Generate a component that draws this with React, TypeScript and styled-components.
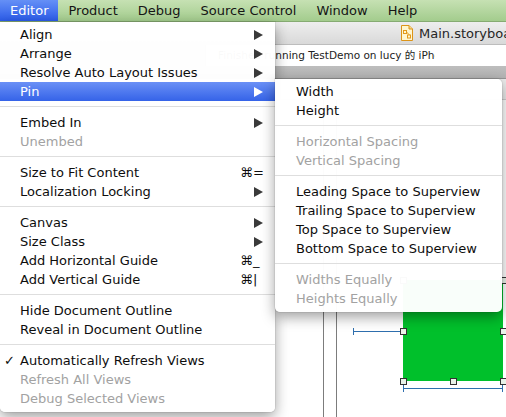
import styled, { createGlobalStyle } from 'styled-components';

const GlobalStyle = createGlobalStyle`
  *, *::before, *::after { box-sizing: border-box; }
  html, body { margin: 0; padding: 0; background: #fff; }
  body { font-family: "DejaVu Sans", "Noto Sans CJK SC", sans-serif; }
`;

const Screen = styled.div`
  position: relative;
  width: 506px;
  height: 417px;
  overflow: hidden;
  background: #fff;
  font-size: 13px;
  color: #111;
`;

const MenuBar = styled.div`
  display: flex;
  height: 22px;
  border-bottom: 1px solid #86ab72;
  background: linear-gradient(#c6e1b3, #a3cc8d);
`;

const BarItem = styled.div<{ $open?: boolean }>`
  padding: 0 10px;
  line-height: 21px;
  white-space: nowrap;
  color: ${p => (p.$open ? '#fff' : '#151515')};
  background: ${p => (p.$open ? 'linear-gradient(#6590f6, #2b5be9)' : 'transparent')};
`;

const Window = styled.div`
  display: flex;
  flex-direction: column;
  height: 395px;
`;

const TabBar = styled.div`
  display: flex;
  align-items: center;
  height: 22px;
  padding-left: 401px;
  background: linear-gradient(#eeeeee, #d9d9d9);
`;

const Tab = styled.div`
  display: flex;
  align-items: center;
  gap: 6px;
  white-space: nowrap;
  color: #262626;
`;

const ActivityRow = styled.div`
  display: flex;
  height: 22px;
  padding-left: 205px;
  background: #d4d4d4;
  border-top: 1px solid #bdbdbd;
`;

const ActivityField = styled.div`
  flex: 1;
  background: #fff;
  border-left: 1px solid #b0b0b0;
  padding-left: 12px;
  font-size: 10.5px;
  line-height: 21px;
  color: #222;
`;

const ActivityText = styled.div`
  width: 217px;
  overflow: hidden;
  white-space: nowrap;
`;

const ToolbarFoot = styled.div`
  height: 13px;
  background: linear-gradient(#bdbdbd, #b3b3b3);
  border-bottom: 1px solid #969696;
`;

const JumpBar = styled.div`
  height: 21px;
  background: #ebebeb;
  border-bottom: 1px solid #cfcfcf;
`;

const Canvas = styled.div`
  position: relative;
  flex: 1;
  background: #fff;
`;

const GuideLine = styled.div<{ $x: number }>`
  position: absolute;
  top: 0;
  bottom: 0;
  left: ${p => p.$x}px;
  width: 1px;
  background: #7c7c7c;
`;

const GreenView = styled.div`
  position: absolute;
  left: 403px;
  top: 180px;
  width: 100px;
  height: 101px;
  background: #00c02b;
`;

const Handle = styled.div<{ $x: number; $y: number }>`
  position: absolute;
  left: ${p => p.$x - 3}px;
  top: ${p => p.$y - 3}px;
  width: 7px;
  height: 7px;
  background: #e9f3e9;
  border: 1px solid #333;
`;

const Dimension = styled.div<{ $x: number; $y: number; $w: number; $right?: boolean }>`
  position: absolute;
  left: ${p => p.$x}px;
  top: ${p => p.$y}px;
  width: ${p => p.$w}px;
  height: 1px;
  background: #2f6fae;
  &::before, &::after {
    content: '';
    position: absolute;
    top: -3px;
    width: 1px;
    height: 7px;
    background: #2f6fae;
  }
  &::before { left: 0; }
  &::after { right: 0; display: ${p => (p.$right ? 'block' : 'none')}; }
`;

const MenuPanel = styled.div<{ $top: number; $left: number; $width: number; $sub?: boolean }>`
  position: absolute;
  top: ${p => p.$top}px;
  left: ${p => p.$left}px;
  width: ${p => p.$width}px;
  padding: 3px 0 4px;
  background: rgba(255, 255, 255, 0.975);
  border-radius: ${p => (p.$sub ? '0 5px 5px 5px' : '0 0 5px 5px')};
  box-shadow: 0 5px 14px rgba(0, 0, 0, 0.38), 0 0 0 1px rgba(0, 0, 0, 0.06);
  z-index: ${p => (p.$sub ? 3 : 2)};
`;

const Row = styled.div<{ $disabled?: boolean; $active?: boolean }>`
  display: flex;
  align-items: center;
  height: 19px;
  padding-right: 12px;
  white-space: nowrap;
  color: ${p => (p.$active ? '#fff' : p.$disabled ? '#a2a2a2' : '#0d0d0d')};
  background: ${p => (p.$active ? 'linear-gradient(#6a90f6, #3563e8)' : 'transparent')};
`;

const Gutter = styled.span<{ $w: number }>`
  width: ${p => p.$w}px;
  padding-left: 4px;
  flex-shrink: 0;
  font-size: 13px;
`;

const Label = styled.span`
  flex: 1;
`;

const Shortcut = styled.span`
  width: 23px;
`;

const Separator = styled.div`
  height: 1px;
  margin: 5px 0 6px;
  background: #dedede;
`;

type Item = {
  label?: string;
  sep?: boolean;
  disabled?: boolean;
  arrow?: boolean;
  keys?: string;
  checked?: boolean;
  active?: boolean;
};

const editorItems: Item[] = [
  { label: 'Align', arrow: true },
  { label: 'Arrange', arrow: true },
  { label: 'Resolve Auto Layout Issues', arrow: true },
  { label: 'Pin', arrow: true, active: true },
  { sep: true },
  { label: 'Embed In', arrow: true },
  { label: 'Unembed', disabled: true },
  { sep: true },
  { label: 'Size to Fit Content', keys: '⌘=' },
  { label: 'Localization Locking', arrow: true },
  { sep: true },
  { label: 'Canvas', arrow: true },
  { label: 'Size Class', arrow: true },
  { label: 'Add Horizontal Guide', keys: '⌘_' },
  { label: 'Add Vertical Guide', keys: '⌘|' },
  { sep: true },
  { label: 'Hide Document Outline' },
  { label: 'Reveal in Document Outline' },
  { sep: true },
  { label: 'Automatically Refresh Views', checked: true },
  { label: 'Refresh All Views', disabled: true },
  { label: 'Debug Selected Views', disabled: true },
];

const pinItems: Item[] = [
  { label: 'Width' },
  { label: 'Height' },
  { sep: true },
  { label: 'Horizontal Spacing', disabled: true },
  { label: 'Vertical Spacing', disabled: true },
  { sep: true },
  { label: 'Leading Space to Superview' },
  { label: 'Trailing Space to Superview' },
  { label: 'Top Space to Superview' },
  { label: 'Bottom Space to Superview' },
  { sep: true },
  { label: 'Widths Equally', disabled: true },
  { label: 'Heights Equally', disabled: true },
];

const Arrow = ({ color }: { color: string }) => (
  <svg width="9" height="10" viewBox="0 0 9 10">
    <polygon points="0,0 9,5 0,10" fill={color} />
  </svg>
);

const StoryboardIcon = () => (
  <svg width="12" height="16" viewBox="0 0 12 16">
    <path d="M0.5 0.5 H8 L11.5 4 V15.5 H0.5 Z" fill="#fff6cf" stroke="#dc9418" />
    <path d="M8 0.5 V4 H11.5" fill="#f6d88a" stroke="#dc9418" />
    <rect x="2.5" y="5.5" width="3" height="3" fill="none" stroke="#e39a1c" />
    <path d="M5.5 7 L8.5 10" stroke="#e39a1c" />
    <rect x="6.5" y="10" width="3" height="3" fill="none" stroke="#e39a1c" />
  </svg>
);

const Menu = ({ items, gutter }: { items: Item[]; gutter: number }) => (
  <>
    {items.map((it, i) =>
      it.sep ? (
        <Separator key={i} />
      ) : (
        <Row key={i} $disabled={it.disabled} $active={it.active}>
          <Gutter $w={gutter}>{it.checked ? '✓' : ''}</Gutter>
          <Label>{it.label}</Label>
          {it.keys && <Shortcut>{it.keys}</Shortcut>}
          {it.arrow && <Arrow color={it.active ? '#fff' : '#3a3a3a'} />}
        </Row>
      )
    )}
  </>
);

const handles = [
  [403, 180], [503, 180], [403, 231], [503, 231], [403, 281], [453, 281], [503, 281],
];

export default function App() {
  return (
    <Screen>
      <GlobalStyle />
      <MenuBar>
        <BarItem $open>Editor</BarItem>
        <BarItem>Product</BarItem>
        <BarItem>Debug</BarItem>
        <BarItem>Source Control</BarItem>
        <BarItem>Window</BarItem>
        <BarItem>Help</BarItem>
      </MenuBar>
      <Window>
        <TabBar>
          <Tab>
            <StoryboardIcon />
            Main.storyboard
          </Tab>
        </TabBar>
        <ActivityRow>
          <ActivityField>
            <ActivityText>Finished running TestDemo on lucy 的 iPhone</ActivityText>
          </ActivityField>
        </ActivityRow>
        <ToolbarFoot />
        <JumpBar />
        <Canvas>
          <GuideLine $x={323} />
          <GuideLine $x={336} />
          <GreenView />
          <Dimension $x={353} $y={231} $w={50} />
          <Dimension $x={403} $y={288} $w={100} $right />
          {handles.map(([x, y], i) => (
            <Handle key={i} $x={x} $y={y} />
          ))}
        </Canvas>
      </Window>
      <MenuPanel $top={22} $left={0} $width={275}>
        <Menu items={editorItems} gutter={20} />
      </MenuPanel>
      <MenuPanel $top={79} $left={275} $width={227} $sub>
        <Menu items={pinItems} gutter={21} />
      </MenuPanel>
    </Screen>
  );
}
